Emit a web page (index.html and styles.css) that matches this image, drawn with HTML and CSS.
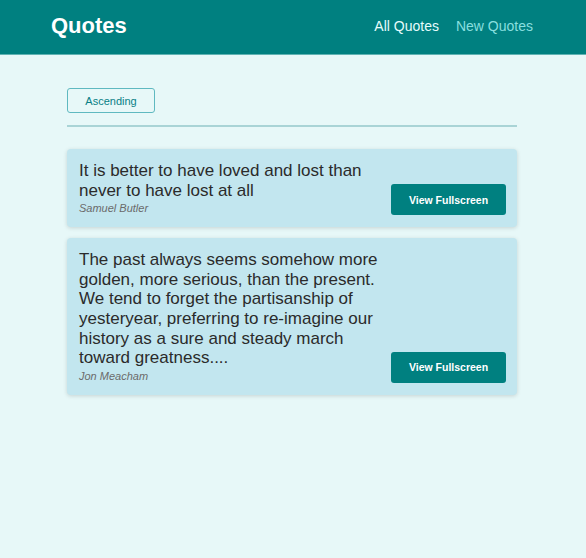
FILE: index.html
```html
<!DOCTYPE html>
<html lang="en">
<head>
<meta charset="utf-8">
<title>Quotes</title>
<link rel="stylesheet" href="styles.css">
</head>
<body>
<header class="header">
  <div class="logo">Quotes</div>
  <nav class="nav">
    <a class="nav-link active" href="#">All Quotes</a>
    <a class="nav-link" href="#">New Quotes</a>
  </nav>
</header>
<main class="main">
  <div class="sorting">
    <button class="sort-btn">Ascending</button>
  </div>
  <ul class="list">
    <li class="item">
      <figure class="figure">
        <blockquote class="quote">It is better to have loved and lost than never to have lost at all</blockquote>
        <figcaption class="author">Samuel Butler</figcaption>
      </figure>
      <a class="btn" href="#">View Fullscreen</a>
    </li>
    <li class="item">
      <figure class="figure">
        <blockquote class="quote">The past always seems somehow more golden, more serious, than the present. We tend to forget the partisanship of yesteryear, preferring to re-imagine our history as a sure and steady march toward greatness....</blockquote>
        <figcaption class="author">Jon Meacham</figcaption>
      </figure>
      <a class="btn" href="#">View Fullscreen</a>
    </li>
  </ul>
</main>
</body>
</html>
```
FILE: styles.css
```css
* { box-sizing: border-box; }
html, body { margin: 0; padding: 0; }
body {
  background: #e7f8f8;
  font-family: "Liberation Sans", Arial, sans-serif;
  min-height: 558px;
}
.header {
  height: 55px;
  background: #008080;
  border-bottom: 1px solid #5fb3b3;
  display: flex;
  align-items: center;
  justify-content: space-between;
  padding: 0 53px 0 51px;
}
.logo {
  color: #fff;
  font-size: 22px;
  font-weight: bold;
  margin-top: -2px;
}
.nav {
  display: flex;
  gap: 17px;
  margin-top: -2px;
}
.nav-link {
  color: #88dfdf;
  text-decoration: none;
  font-size: 14px;
}
.nav-link.active { color: #e6fcfc; }
.main {
  width: 450px;
  margin: 0 0 0 67px;
  padding-top: 33px;
}
.sorting {
  padding-bottom: 12px;
  border-bottom: 2px solid #a9d4d6;
  margin-bottom: 22px;
}
.sort-btn {
  font-family: inherit;
  font-size: 11px;
  color: #077f86;
  background: transparent;
  border: 1px solid #5fb9c0;
  border-radius: 3px;
  width: 88px;
  height: 25px;
  padding: 0;
  cursor: pointer;
}
.list {
  list-style: none;
  margin: 0;
  padding: 0;
  display: flex;
  flex-direction: column;
  gap: 11px;
}
.item {
  background: #c2e6ef;
  border-radius: 4px;
  box-shadow: 0 1px 4px rgba(0,0,0,0.15);
  display: flex;
  justify-content: space-between;
  align-items: flex-end;
  padding: 12px 11px 12px 12px;
}
.figure {
  margin: 0;
  width: 300px;
}
.quote {
  margin: 0;
  font-size: 17px;
  line-height: 19.6px;
  color: #2b2b2b;
}
.author {
  font-style: italic;
  font-size: 11px;
  color: #6b6b6b;
  margin-top: 1px;
  line-height: 14px;
}
.btn {
  display: inline-flex;
  align-items: center;
  justify-content: center;
  width: 115px;
  height: 31px;
  background: #008080;
  color: #fff;
  font-weight: bold;
  font-size: 10.5px;
  text-decoration: none;
  border-radius: 3px;
  margin-bottom: 0;
}
```
